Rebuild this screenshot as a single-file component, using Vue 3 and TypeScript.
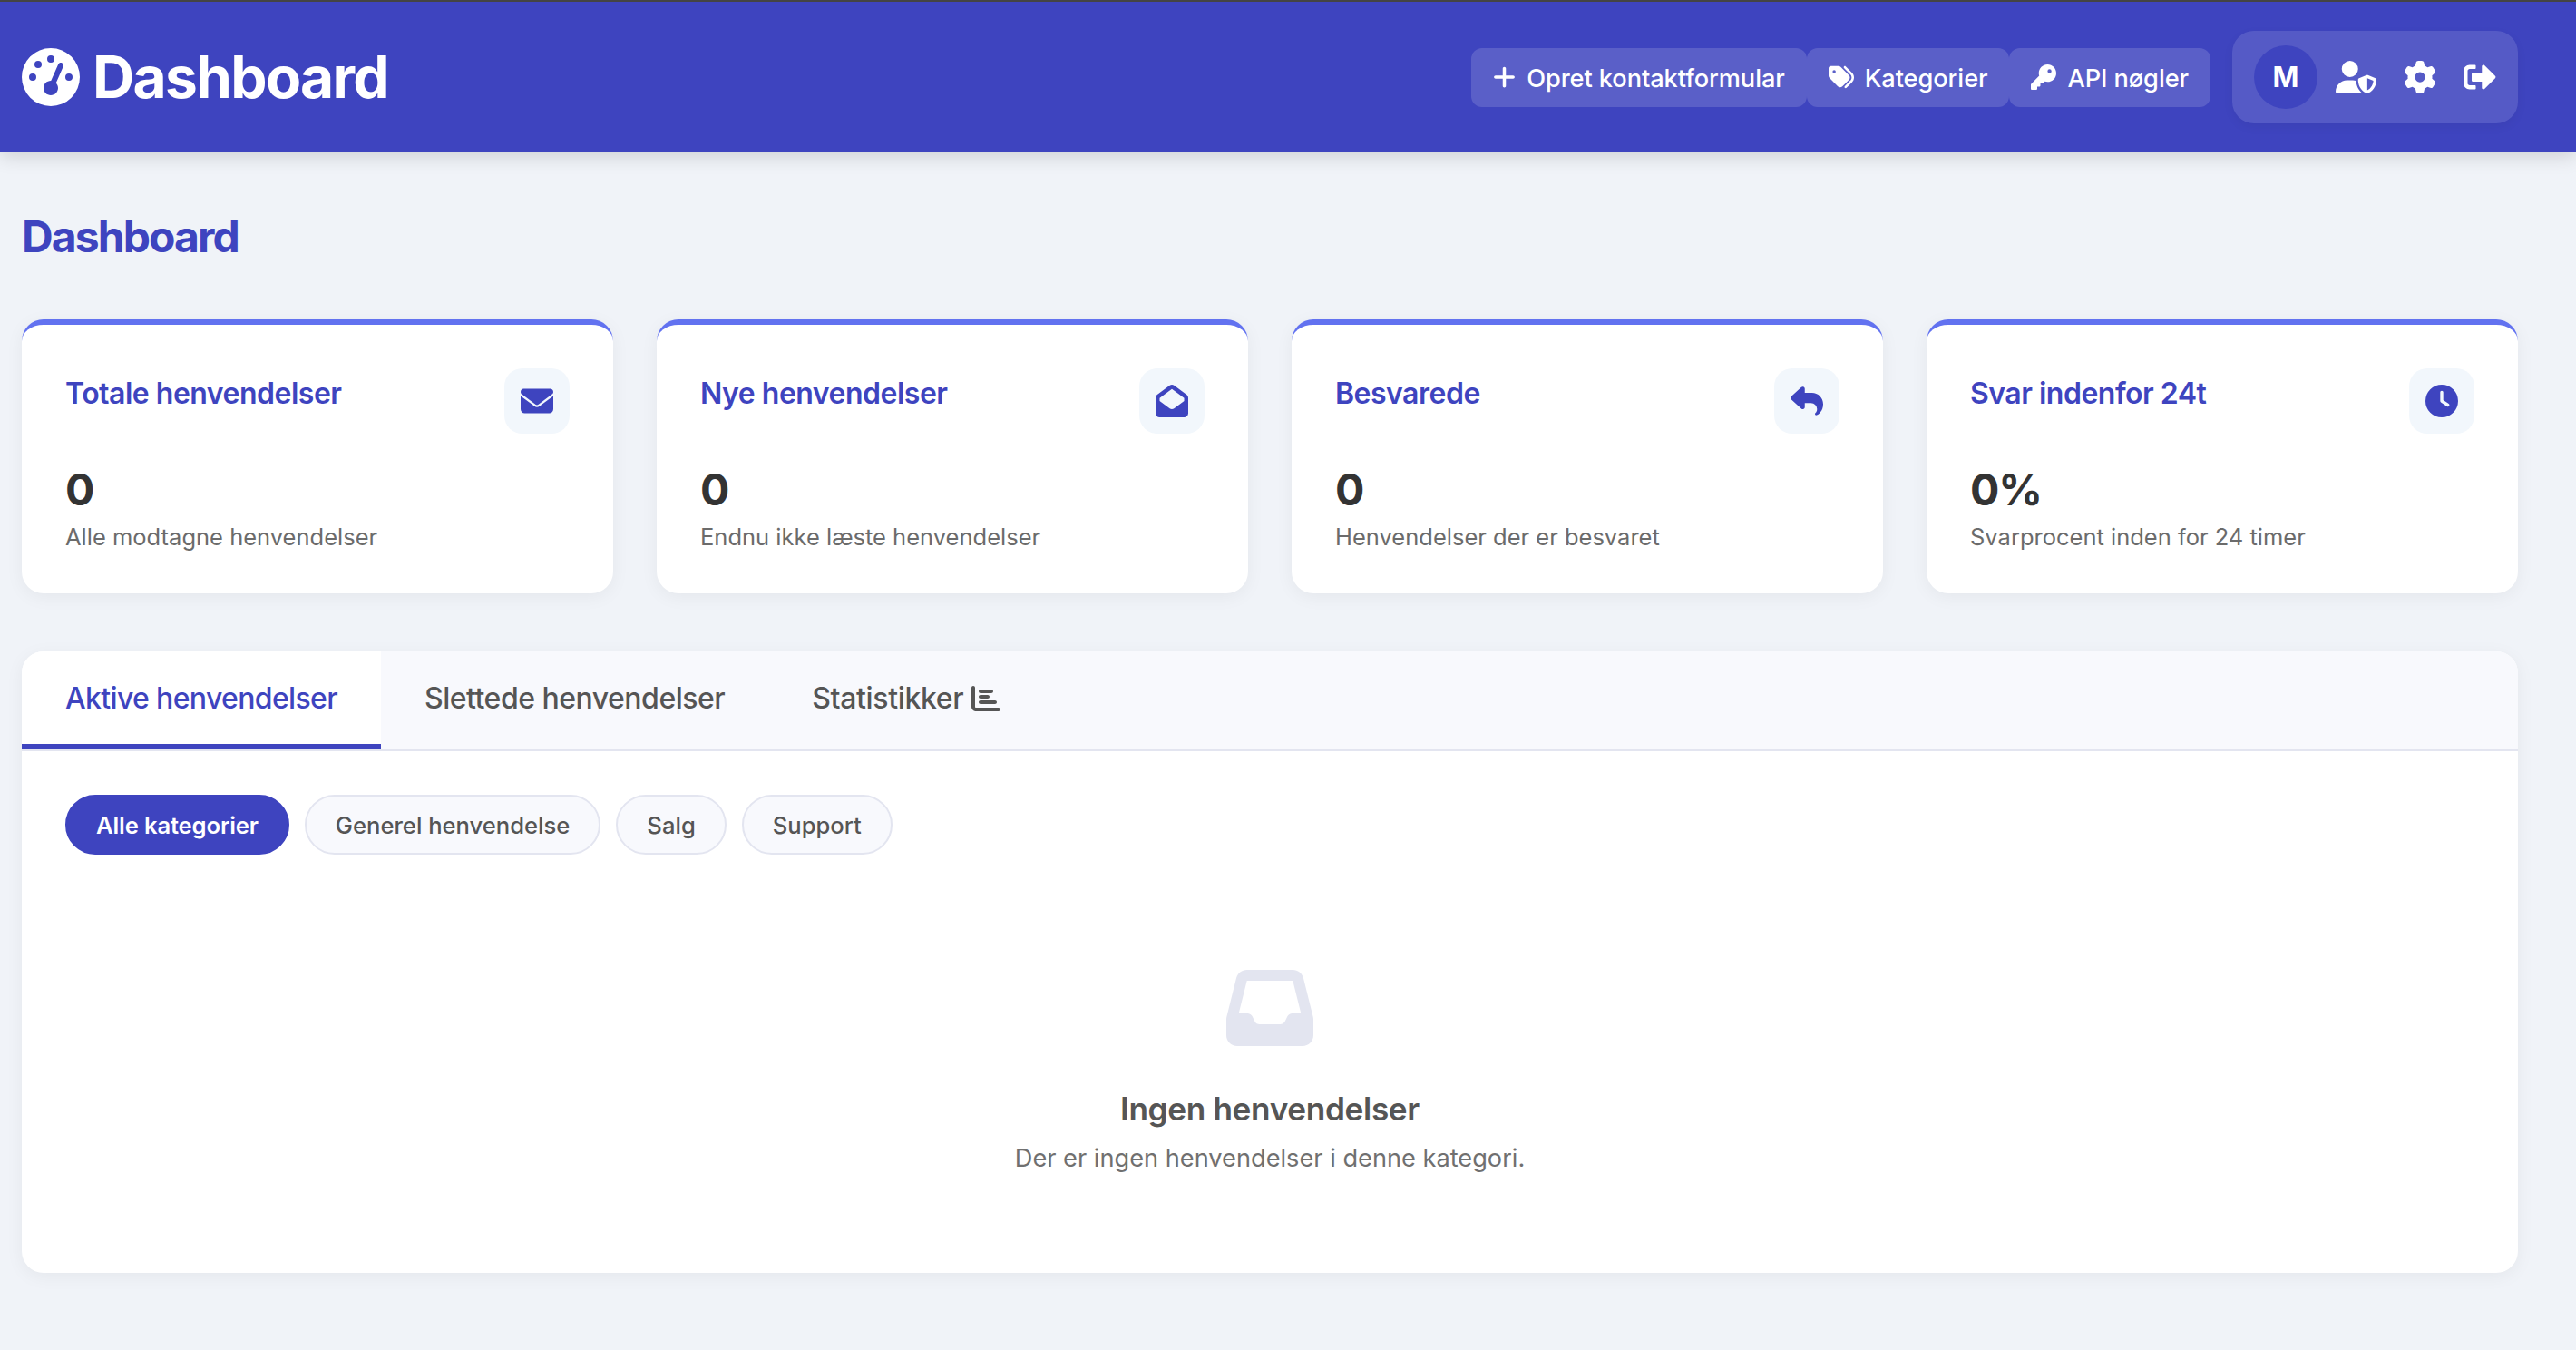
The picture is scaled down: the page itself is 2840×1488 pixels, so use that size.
<script setup lang="ts">
interface Stat { title: string; value: string; desc: string; path: string }
const P = {
  gauge: 'M0 256a256 256 0 1 1 512 0A256 256 0 1 1 0 256zM288 96a32 32 0 1 0 -64 0 32 32 0 1 0 64 0zM256 416c35.3 0 64-28.7 64-64c0-17.4-6.9-33.1-18.1-44.6L366 161.7c5.3-12.1-.2-26.3-12.3-31.6s-26.3 .2-31.6 12.3L257.9 288c-.6 0-1.3 0-1.9 0c-35.3 0-64 28.7-64 64s28.7 64 64 64zM176 144a32 32 0 1 0 -64 0 32 32 0 1 0 64 0zM96 288a32 32 0 1 0 0-64 32 32 0 1 0 0 64zm352-32a32 32 0 1 0 -64 0 32 32 0 1 0 64 0z',
  plus: 'M256 80c0-17.7-14.3-32-32-32s-32 14.3-32 32V224H48c-17.7 0-32 14.3-32 32s14.3 32 32 32H192V432c0 17.7 14.3 32 32 32s32-14.3 32-32V288H400c17.7 0 32-14.3 32-32s-14.3-32-32-32H256V80z',
  tags: 'M345 39.1L472.8 168.4c52.4 53 52.4 138.2 0 191.2L360.8 472.9c-9.3 9.4-24.5 9.5-33.9 .2s-9.5-24.5-.2-33.9L438.6 325.9c33.9-34.3 33.9-89.4 0-123.7L310.9 72.9c-9.3-9.4-9.2-24.6 .2-33.9s24.6-9.2 33.9 .2zM0 229.5V80C0 53.5 21.5 32 48 32H197.5c17 0 33.3 6.7 45.3 18.7l168 168c25 25 25 65.5 0 90.5L277.3 442.7c-25 25-65.5 25-90.5 0l-168-168C6.7 262.7 0 246.5 0 229.5zM144 144a32 32 0 1 0 -64 0 32 32 0 1 0 64 0z',
  key: 'M336 352c97.2 0 176-78.8 176-176S433.2 0 336 0S160 78.8 160 176c0 18.7 2.9 36.8 8.3 53.7L7 391c-4.5 4.5-7 10.6-7 17v80c0 13.3 10.7 24 24 24h80c13.3 0 24-10.7 24-24V448h40c13.3 0 24-10.7 24-24V384h40c6.4 0 12.5-2.5 17-7l33.3-33.3c16.9 5.4 35 8.3 53.7 8.3zM376 96a40 40 0 1 1 0 80 40 40 0 1 1 0-80z',
  userShield: 'M224 256A128 128 0 1 0 224 0a128 128 0 1 0 0 256zm-45.7 48C79.8 304 0 383.8 0 482.3C0 498.7 13.3 512 29.7 512H418.3c1.8 0 3.5-.2 5.3-.5c-76.3-55.1-99.8-141-103.1-200.2c-16.1-4.8-33.1-7.3-50.7-7.3H178.3zm308.8-78.3l-120 48C358 277.4 352 286.2 352 296c0 63.3 25.9 168.8 134.8 214.2c5.9 2.5 12.6 2.5 18.5 0C614.1 464.8 640 359.3 640 296c0-9.8-6-18.6-15.1-22.3l-120-48c-5.7-2.3-12.1-2.3-17.8 0zM591.4 312c-3.9 50.7-27.2 116.7-95.4 149.7V273.8L591.4 312z',
  gear: 'M495.9 166.6c3.2 8.7 .5 18.4-6.4 24.6l-43.3 39.4c1.1 8.3 1.7 16.8 1.7 25.4s-.6 17.1-1.7 25.4l43.3 39.4c6.9 6.2 9.6 15.9 6.4 24.6c-4.4 11.9-9.7 23.3-15.8 34.3l-4.7 8.1c-6.6 11-14 21.4-22.1 31.2c-5.9 7.2-15.7 9.6-24.5 6.8l-55.7-17.7c-13.4 10.3-28.2 18.9-44 25.4l-12.5 57.1c-2 9.1-9 16.3-18.2 17.8c-13.8 2.3-28 3.5-42.5 3.5s-28.7-1.2-42.5-3.5c-9.2-1.5-16.2-8.7-18.2-17.8l-12.5-57.1c-15.8-6.5-30.6-15.1-44-25.4L83.1 425.9c-8.8 2.8-18.6 .3-24.5-6.8c-8.1-9.8-15.5-20.2-22.1-31.2l-4.7-8.1c-6.1-11-11.4-22.4-15.8-34.3c-3.2-8.7-.5-18.4 6.4-24.6l43.3-39.4C64.6 273.1 64 264.6 64 256s.6-17.1 1.7-25.4L22.4 191.2c-6.9-6.2-9.6-15.9-6.4-24.6c4.4-11.9 9.7-23.3 15.8-34.3l4.7-8.1c6.6-11 14-21.4 22.1-31.2c5.9-7.2 15.7-9.6 24.5-6.8l55.7 17.7c13.4-10.3 28.2-18.9 44-25.4l12.5-57.1c2-9.1 9-16.3 18.2-17.8C227.3 1.2 241.5 0 256 0s28.7 1.2 42.5 3.5c9.2 1.5 16.2 8.7 18.2 17.8l12.5 57.1c15.8 6.5 30.6 15.1 44 25.4l55.7-17.7c8.8-2.8 18.6-.3 24.5 6.8c8.1 9.8 15.5 20.2 22.1 31.2l4.7 8.1c6.1 11 11.4 22.4 15.8 34.3zM256 336a80 80 0 1 0 0-160 80 80 0 1 0 0 160z',
  signOut: 'M497 273L329 441c-15 15-41 4.5-41-17v-96H152c-13.3 0-24-10.7-24-24v-96c0-13.3 10.7-24 24-24h136V88c0-21.4 25.9-32 41-17l168 168c9.3 9.4 9.3 24.6 0 34zM192 436v-40c0-6.6-5.4-12-12-12H96c-17.7 0-32-14.3-32-32V160c0-17.7 14.3-32 32-32h84c6.6 0 12-5.4 12-12V76c0-6.6-5.4-12-12-12H96c-53 0-96 43-96 96v192c0 53 43 96 96 96h84c6.6 0 12-5.4 12-12z',
  envelope: 'M48 64C21.5 64 0 85.5 0 112c0 15.1 7.1 29.3 19.2 38.4L236.8 313.6c11.4 8.5 27 8.5 38.4 0L492.8 150.4c12.1-9.1 19.2-23.3 19.2-38.4c0-26.5-21.5-48-48-48H48zM0 176V384c0 35.3 28.7 64 64 64H448c35.3 0 64-28.7 64-64V176L294.4 339.2c-22.8 17.1-54 17.1-76.8 0L0 176z',
  envelopeOpen: 'M64 208.1L256 65.9 448 208.1v47.4L289.5 373c-9.7 7.2-21.4 11-33.5 11s-23.9-3.9-33.5-11L64 255.5V208.1zM256 0c-12.1 0-23.8 3.9-33.5 11L25.9 156.7C9.6 168.8 0 187.8 0 208.1V448c0 35.3 28.7 64 64 64H448c35.3 0 64-28.7 64-64V208.1c0-20.3-9.6-39.4-25.9-51.4L289.5 11C279.8 3.9 268.1 0 256 0z',
  reply: 'M205 34.8c11.5 5.1 19 16.6 19 29.2v64H336c97.2 0 176 78.8 176 176c0 113.3-81.5 163.9-100.2 174.1c-2.5 1.4-5.3 1.9-8.1 1.9c-10.9 0-19.7-8.9-19.7-19.7c0-7.5 4.3-14.4 9.8-19.5c9.4-8.8 22.2-26.4 22.2-56.7c0-53-43-96-96-96H224v64c0 12.6-7.4 24.1-19 29.2s-25 3-34.4-5.4l-160-144C3.9 225.7 0 217.1 0 208s3.9-17.7 10.6-23.8l160-144c9.4-8.5 22.8-10.6 34.4-5.4z',
  clock: 'M256 0a256 256 0 1 1 0 512A256 256 0 1 1 256 0zM232 120V256c0 8 4 15.5 10.7 20l96 64c11 7.4 25.9 4.4 33.3-6.7s4.4-25.9-6.7-33.3L280 243.2V120c0-13.3-10.7-24-24-24s-24 10.7-24 24z',
  chart: 'M32 32c17.7 0 32 14.3 32 32V400c0 8.8 7.2 16 16 16H480c17.7 0 32 14.3 32 32s-14.3 32-32 32H80c-44.2 0-80-35.8-80-80V64C0 46.3 14.3 32 32 32zm96 96c0-17.7 14.3-32 32-32l192 0c17.7 0 32 14.3 32 32s-14.3 32-32 32l-192 0c-17.7 0-32-14.3-32-32zm32 64H288c17.7 0 32 14.3 32 32s-14.3 32-32 32H160c-17.7 0-32-14.3-32-32s14.3-32 32-32zm0 96H416c17.7 0 32 14.3 32 32s-14.3 32-32 32H160c-17.7 0-32-14.3-32-32s14.3-32 32-32z',
  inbox: 'M121 32C91.6 32 66 52 58.9 80.5L1.9 308.4C.6 313.5 0 318.7 0 323.9V416c0 35.3 28.7 64 64 64H448c35.3 0 64-28.7 64-64V323.9c0-5.2-.6-10.4-1.9-15.5l-57-227.9C446 52 420.4 32 391 32H121zm0 64H391l48 192H387.8c-12.1 0-23.2 6.8-28.6 17.7l-14.3 28.6c-5.4 10.8-16.5 17.7-28.6 17.7H195.8c-12.1 0-23.2-6.8-28.6-17.7l-14.3-28.6c-5.4-10.8-16.5-17.7-28.6-17.7H73L121 96z',
}
const actions = [
  { label: 'Opret kontaktformular', path: P.plus, view: '0 0 448 512', size: 'narrow' },
  { label: 'Kategorier', path: P.tags, view: '0 0 512 512', size: 'square' },
  { label: 'API nøgler', path: P.key, view: '0 0 512 512', size: 'square' },
]
const stats: Stat[] = [
  { title: 'Totale henvendelser', value: '0', desc: 'Alle modtagne henvendelser', path: P.envelope },
  { title: 'Nye henvendelser', value: '0', desc: 'Endnu ikke læste henvendelser', path: P.envelopeOpen },
  { title: 'Besvarede', value: '0', desc: 'Henvendelser der er besvaret', path: P.reply },
  { title: 'Svar indenfor 24t', value: '0%', desc: 'Svarprocent inden for 24 timer', path: P.clock },
]
const filters = ['Alle kategorier', 'Generel henvendelse', 'Salg', 'Support']
</script>

<template>
  <div class="page">
    <header class="topbar">
      <div class="brand">
        <svg class="brand-icon" viewBox="0 0 512 512"><path :d="P.gauge" /></svg>
        <span>Dashboard</span>
      </div>
      <div class="top-right">
        <nav class="actions">
          <a v-for="a in actions" :key="a.label" class="action">
            <svg class="action-icon" :class="a.size" :viewBox="a.view"><path :d="a.path" /></svg>
            <span>{{ a.label }}</span>
          </a>
        </nav>
        <div class="user">
          <div class="avatar">M</div>
          <svg class="u-icon shield" viewBox="0 0 640 512"><path :d="P.userShield" /></svg>
          <svg class="u-icon" viewBox="0 0 512 512"><path :d="P.gear" /></svg>
          <svg class="u-icon" viewBox="0 0 512 512"><path :d="P.signOut" /></svg>
        </div>
      </div>
    </header>

    <main class="main">
      <h1 class="title">Dashboard</h1>

      <section class="stats">
        <article v-for="s in stats" :key="s.title" class="card">
          <div class="card-head">
            <h3 class="card-title">{{ s.title }}</h3>
            <div class="card-icon"><svg viewBox="0 0 512 512"><path :d="s.path" /></svg></div>
          </div>
          <div class="card-value">{{ s.value }}</div>
          <div class="card-desc">{{ s.desc }}</div>
        </article>
      </section>

      <section class="panel">
        <div class="tabs">
          <div class="tab active">Aktive henvendelser</div>
          <div class="tab second">Slettede henvendelser</div>
          <div class="tab third">Statistikker <svg class="tab-icon" viewBox="0 0 512 512"><path :d="P.chart" /></svg></div>
        </div>
        <div class="panel-body">
          <div class="filters">
            <button v-for="(f, i) in filters" :key="f" class="pill" :class="{ on: i === 0 }">{{ f }}</button>
          </div>
          <div class="empty">
            <svg class="empty-icon" viewBox="0 0 512 512"><path :d="P.inbox" /></svg>
            <h3 class="empty-title">Ingen henvendelser</h3>
            <p class="empty-text">Der er ingen henvendelser i denne kategori.</p>
          </div>
        </div>
      </section>
    </main>
  </div>
</template>

<style>
html, body { margin: 0; background: #f0f3f8; }
</style>

<style scoped>
.page {
  min-height: 1488px;
  background: #f0f3f8;
  font-family: Inter, "Liberation Sans", sans-serif;
  line-height: 1.6;
  color: #333;
}
.topbar {
  box-sizing: border-box;
  height: 168px;
  border-top: 2px solid #444;
  background: #3e44bf;
  box-shadow: 0 4px 20px rgba(0, 0, 0, 0.15);
  padding: 0 64px 0 24px;
  display: flex;
  align-items: center;
  justify-content: space-between;
  position: relative;
}
.brand {
  display: flex;
  align-items: center;
  gap: 14px;
  color: #fff;
  font-size: 64px;
  font-weight: 700;
  letter-spacing: -1.7px;
  line-height: 1;
}
.brand-icon { width: 64px; height: 64px; fill: #fff; }
.top-right { display: flex; align-items: center; gap: 24px; }
.actions { display: flex; }
.action {
  box-sizing: border-box;
  display: flex;
  align-items: center;
  gap: 12px;
  height: 65px;
  padding: 3px 24px 0;
  border-radius: 12px;
  background: rgba(255, 255, 255, 0.15);
  color: #fff;
  font-size: 27.2px;
  font-weight: 500;
  letter-spacing: -0.08px;
}
.action-icon { height: 28px; margin-top: -3px; fill: #fff; flex: none; }
.action-icon.narrow { width: 25px; }
.action-icon.square { width: 28px; }
.user {
  display: flex;
  align-items: center;
  gap: 30px;
  padding: 16px 24px;
  border-radius: 24px;
  background: rgba(255, 255, 255, 0.12);
  box-shadow: 0 4px 12px rgba(0, 0, 0, 0.05);
}
.avatar {
  width: 70px;
  height: 70px;
  margin-right: -10px;
  border-radius: 50%;
  background: #3e44bf;
  color: #fff;
  font-size: 31px;
  font-weight: 700;
  display: flex;
  align-items: center;
  justify-content: center;
}
.u-icon { width: 36px; height: 36px; fill: #fff; flex: none; }
.shield { width: 45px; }
.main { padding: 64px 64px 0 24px; }
.title {
  margin: 0 0 62px;
  color: #3e44bf;
  font-size: 48px;
  font-weight: 700;
  letter-spacing: -1.9px;
  line-height: 58px;
}
.stats { display: grid; grid-template-columns: repeat(4, 1fr); gap: 48px; }
.card {
  box-sizing: border-box;
  height: 302px;
  padding: 48px;
  border-top: 6px solid #6272f0;
  border-radius: 24px;
  background: #fff;
  box-shadow: 0 4px 20px rgba(0, 0, 0, 0.05);
}
.card-head { display: flex; justify-content: space-between; align-items: flex-start; }
.card-title { margin: 2px 0 0; color: #3e44bf; font-size: 32px; font-weight: 600; letter-spacing: -0.5px; }
.card-icon {
  width: 72px;
  height: 72px;
  border-radius: 20px;
  background: #f2f7fc;
  display: flex;
  align-items: center;
  justify-content: center;
}
.card-icon svg { width: 36px; height: 36px; fill: #3e44bf; }
.card-value { margin-top: 33px; font-size: 48px; font-weight: 700; letter-spacing: -1px; line-height: 1.2; color: #333; }
.card-desc { margin-top: 8px; font-size: 25.5px; line-height: 1.2; color: #6b6b6b; }
.panel {
  margin-top: 64px;
  height: 685px;
  border-radius: 24px;
  background: #fff;
  box-shadow: 0 4px 20px rgba(0, 0, 0, 0.05);
  overflow: hidden;
}
.tabs {
  box-sizing: border-box;
  height: 110px;
  display: flex;
  background: #f8f9fd;
  border-bottom: 2px solid #e3e5f0;
}
.tab {
  box-sizing: border-box;
  height: 108px;
  padding: 1px 48px 0;
  border-bottom: 6px solid transparent;
  display: flex;
  align-items: center;
  gap: 9px;
  font-size: 32px;
  font-weight: 500;
  letter-spacing: -0.65px;
  color: #555;
}
.tab.second { letter-spacing: -0.5px; }
.tab.third { letter-spacing: -0.35px; }
.tab.active { background: #fff; color: #3e44bf; border-bottom-color: #3e44bf; }
.tab-icon { width: 32px; height: 32px; fill: #555; }
.panel-body { padding: 48px; }
.filters { display: flex; gap: 17px; }
.pill {
  box-sizing: border-box;
  height: 66px;
  padding: 1px 32px 0;
  border: 2px solid #e3e5f0;
  border-radius: 33px;
  background: #f8f9fd;
  color: #555;
  font-family: inherit;
  font-size: 25.6px;
  font-weight: 500;
}
.pill.on { background: #3e44bf; border-color: #3e44bf; color: #fff; font-weight: 600; letter-spacing: -0.13px; }
.empty {
  margin-top: 121px;
  display: flex;
  flex-direction: column;
  align-items: center;
}
.empty-icon { width: 96px; height: 96px; fill: #e3e5f0; }
.empty-title { margin: 35px 0 0; font-size: 35.2px; font-weight: 600; letter-spacing: -0.35px; color: #555; line-height: 1.6; }
.empty-text { margin: 5px 0 0; font-size: 27.2px; color: #707070; line-height: 1.6; }
</style>
